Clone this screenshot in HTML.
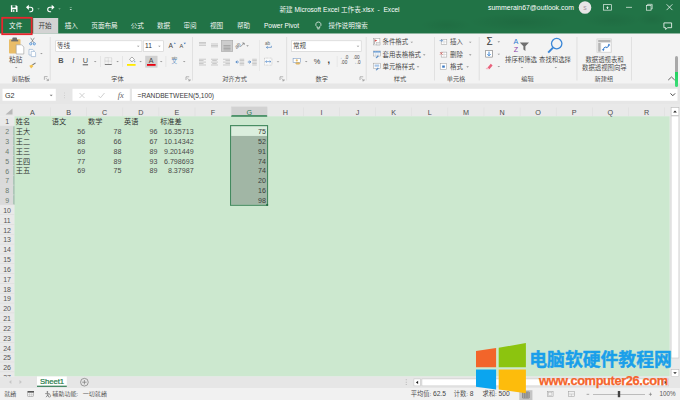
<!DOCTYPE html>
<html lang="zh-CN"><head><meta charset="utf-8"><title>Excel</title>
<style>
html,body{margin:0;padding:0;background:#f3f3f3;}
body{width:680px;height:400px;overflow:hidden;position:relative;font-family:"Liberation Sans","Noto Sans CJK SC",sans-serif;font-weight:350;}
#app{position:absolute;left:0;top:0;width:680px;height:400px;overflow:hidden;background:#f3f3f3;}
.b{position:absolute;display:block;}
.t{position:absolute;white-space:nowrap;line-height:1;}
.w{color:#fff;}
svg{overflow:visible;}
</style></head><body><div id="app">

<svg class="b" style="left:0px;top:0px" width="680" height="34"><rect x="0.00" y="0.00" width="680.00" height="33.80" fill="#217346"/></svg>
<div class="b" style="left:380px;top:0px;width:300px;height:33.6px;background:radial-gradient(ellipse 52px 9px at 140px 22px,rgba(0,0,0,.07),rgba(0,0,0,0)),radial-gradient(ellipse 30px 8px at 232px 20px,rgba(0,0,0,.06),rgba(0,0,0,0)),radial-gradient(ellipse 16px 7px at 272px 19px,rgba(0,0,0,.06),rgba(0,0,0,0)),radial-gradient(ellipse 26px 7px at 66px 25px,rgba(0,0,0,.05),rgba(0,0,0,0));"></div>
<svg class="b" style="left:10px;top:5px" width="9" height="8"><g transform="translate(0.90,0.30)"><path d="M0 0H5.4L6.6 1.2V6.6H0Z" fill="#fff"/><rect x="1.4" y="0" width="3.2" height="2.3" fill="#217346"/><rect x="1.4" y="3.9" width="3.8" height="2.7" fill="#217346"/><rect x="2.3" y="4.6" width="1.1" height="2" fill="#fff"/></g></svg>
<svg class="b" style="left:26px;top:4px" width="9" height="10"><g transform="translate(0.00,0.10)"><path d="M1 3.2H4.6A2.2 2.2 0 0 1 4.6 7.6H3.4" fill="none" stroke="#fff" stroke-width="1.1"/><path d="M0 3.2L2.8 0.6V5.8Z" fill="#fff"/></g></svg>
<svg class="b" style="left:37px;top:8px" width="4" height="3"><g transform="translate(0.30,0.40)"><path d="M0 0H2.4L1.2 1.2Z" fill="#9cc3ad"/></g></svg>
<svg class="b" style="left:46px;top:4px" width="10" height="10"><g transform="translate(0.50,0.10)"><path d="M7 3.2H3.4A2.2 2.2 0 0 0 3.4 7.6H4.6" fill="none" stroke="#fff" stroke-width="1.1"/><path d="M8 3.2L5.2 0.6V5.8Z" fill="#fff"/></g></svg>
<svg class="b" style="left:58px;top:8px" width="4" height="3"><g transform="translate(0.30,0.40)"><path d="M0 0H2.4L1.2 1.2Z" fill="#9cc3ad"/></g></svg>
<svg class="b" style="left:69px;top:7px" width="3" height="1"><rect x="0.70" y="0.30" width="2.20" height="0.60" fill="#8fbfa3"/></svg>
<svg class="b" style="left:69px;top:8px" width="4" height="4"><g transform="translate(0.65,0.93)"><path d="M0 0H2.3L1.15 1.15Z" fill="#fff"/></g></svg>
<div class="t " style="left:339.5px;top:9.6px;font-size:6.6px;color:#fff;transform:translate(-50%,-50%);">新建 Microsoft Excel 工作表.xlsx&nbsp; -&nbsp; Excel</div>
<div class="t " style="left:574px;top:7.8px;font-size:6.9px;color:#fff;transform:translate(-100%,-50%);">summerain67@outlook.com</div>
<svg class="b" style="left:578px;top:1px" width="15" height="14"><g transform="translate(0.70,0.20)"><circle cx="6.3" cy="6.3" r="6.3" fill="#e7e5e6"/></g></svg>
<div class="t " style="left:585px;top:7.6px;font-size:5px;color:#9a8a92;transform:translate(-50%,-50%);">S</div>
<svg class="b" style="left:603px;top:4px" width="10" height="8"><g transform="translate(0.20,0.30)"><rect x=".35" y=".35" width="7.9" height="5.5" fill="none" stroke="#e6f0ea" stroke-width=".7"/><path d="M2.9 3.5L4.3 2L5.7 3.5Z M3.8 3.3H4.8V4.8H3.8Z" fill="#e6f0ea"/></g></svg>
<svg class="b" style="left:626px;top:6px" width="6" height="2"><rect x="0.00" y="0.90" width="6.00" height="0.70" fill="#e6f0ea"/></svg>
<svg class="b" style="left:646px;top:4px" width="8" height="8"><g transform="translate(0.00,0.00)"><rect x=".35" y="1.5" width="4.7" height="4.7" fill="none" stroke="#e6f0ea" stroke-width=".7"/><path d="M1.6 1.5V.35H6.2V4.9H5.05" fill="none" stroke="#e6f0ea" stroke-width=".7"/></g></svg>
<svg class="b" style="left:666px;top:4px" width="8" height="8"><g transform="translate(0.60,0.30)"><path d="M0 0L5.8 5.8M5.8 0L0 5.8" stroke="#eef5f1" stroke-width=".8"/></g></svg>
<svg class="b" style="left:663px;top:22px" width="10" height="9"><g transform="translate(0.50,0.50)"><path d="M.4 .4H8.1V5.2H4L2.2 7V5.2H.4Z" fill="none" stroke="#fff" stroke-width=".8"/></g></svg>
<svg class="b" style="left:33px;top:18px" width="26" height="16"><rect x="0.20" y="0.00" width="25.00" height="15.60" fill="#d3d3d3"/></svg>
<div class="t " style="left:15.7px;top:25.7px;font-size:6.6px;color:#fff;transform:translate(-50%,-50%);">文件</div>
<div class="t " style="left:45px;top:25.7px;font-size:6.6px;color:#333;transform:translate(-50%,-50%);">开始</div>
<div class="t " style="left:71.3px;top:25.6px;font-size:6.6px;color:#fff;transform:translate(-50%,-50%);">插入</div>
<div class="t " style="left:104.5px;top:25.6px;font-size:6.6px;color:#fff;transform:translate(-50%,-50%);">页面布局</div>
<div class="t " style="left:137.3px;top:25.6px;font-size:6.6px;color:#fff;transform:translate(-50%,-50%);">公式</div>
<div class="t " style="left:163.5px;top:25.6px;font-size:6.6px;color:#fff;transform:translate(-50%,-50%);">数据</div>
<div class="t " style="left:190px;top:25.6px;font-size:6.6px;color:#fff;transform:translate(-50%,-50%);">审阅</div>
<div class="t " style="left:216.5px;top:25.6px;font-size:6.6px;color:#fff;transform:translate(-50%,-50%);">视图</div>
<div class="t " style="left:243.5px;top:25.6px;font-size:6.6px;color:#fff;transform:translate(-50%,-50%);">帮助</div>
<div class="t " style="left:281.5px;top:25.6px;font-size:6.6px;color:#fff;transform:translate(-50%,-50%);">Power Pivot</div>
<svg class="b" style="left:315px;top:21px" width="8" height="10"><g transform="translate(0.40,0.50)"><path d="M3 .5A2.5 2.5 0 0 1 4.3 5.2V6.4H1.7V5.2A2.5 2.5 0 0 1 3 .5Z" fill="none" stroke="#fff" stroke-width=".7"/><path d="M1.9 7.4H4.1" stroke="#fff" stroke-width=".7"/></g></svg>
<div class="t " style="left:328.4px;top:25.6px;font-size:6.6px;color:#fff;transform:translate(0,-50%);">操作说明搜索</div>
<svg class="b" style="left:0px;top:33px" width="680" height="51"><rect x="0.00" y="0.60" width="680.00" height="49.90" fill="#f3f3f3"/></svg>
<svg class="b" style="left:49px;top:37px" width="2" height="44"><rect x="0.80" y="0.00" width="0.70" height="43.50" fill="#d8d8d8"/></svg>
<svg class="b" style="left:192px;top:37px" width="1" height="44"><rect x="0.30" y="0.00" width="0.70" height="43.50" fill="#d8d8d8"/></svg>
<svg class="b" style="left:286px;top:37px" width="2" height="44"><rect x="0.40" y="0.00" width="0.70" height="43.50" fill="#d8d8d8"/></svg>
<svg class="b" style="left:365px;top:37px" width="2" height="44"><rect x="0.80" y="0.00" width="0.70" height="43.50" fill="#d8d8d8"/></svg>
<svg class="b" style="left:434px;top:37px" width="1" height="44"><rect x="0.00" y="0.00" width="0.70" height="43.50" fill="#d8d8d8"/></svg>
<svg class="b" style="left:478px;top:37px" width="2" height="44"><rect x="0.80" y="0.00" width="0.70" height="43.50" fill="#d8d8d8"/></svg>
<svg class="b" style="left:576px;top:37px" width="2" height="44"><rect x="0.60" y="0.00" width="0.70" height="43.50" fill="#d8d8d8"/></svg>
<svg class="b" style="left:631px;top:37px" width="1" height="44"><rect x="0.20" y="0.00" width="0.70" height="43.50" fill="#d8d8d8"/></svg>
<svg class="b" style="left:9px;top:37px" width="16" height="19"><g transform="translate(0.00,0.60)"><rect x="0" y="1.6" width="11.5" height="14.4" rx=".8" fill="#e9bd68"/><rect x="3.4" y="0" width="4.6" height="3.2" rx=".8" fill="#6d6d6d"/><rect x="2.2" y="2.2" width="7" height="1.6" fill="#6d6d6d"/><path d="M7.2 7.2H12.6L14.8 9.4V16.4H7.2Z" fill="#fff" stroke="#9a9a9a" stroke-width=".6"/></g></svg>
<div class="t" style="left:15.7px;top:59.6px;font-size:6.6px;color:#3c3c3c;transform:translate(-50%,-50%);">粘贴</div>
<svg class="b" style="left:14px;top:66px" width="5" height="4"><g transform="translate(0.90,0.95)"><path d="M0 0H2.6L1.3 1.3Z" fill="#969696"/></g></svg>
<svg class="b" style="left:29px;top:37px" width="8" height="10"><g transform="translate(0.30,0.80)"><path d="M1.4 0L4.6 5M5 0L1.8 5" stroke="#777" stroke-width=".7"/><circle cx="1.4" cy="6" r="1.1" fill="none" stroke="#2b7bd0" stroke-width=".7"/><circle cx="5" cy="6" r="1.1" fill="none" stroke="#2b7bd0" stroke-width=".7"/></g></svg>
<svg class="b" style="left:28px;top:49px" width="9" height="9"><g transform="translate(0.60,0.00)"><path d="M.4 .4H4L5.4 1.8V6H.4Z" fill="#fff" stroke="#8aa9cc" stroke-width=".6"/><path d="M2.6 2.4H5.8L7 3.6V7.6H2.6Z" fill="#fff" stroke="#8aa9cc" stroke-width=".6"/></g></svg>
<svg class="b" style="left:40px;top:52px" width="4" height="4"><g transform="translate(0.10,0.95)"><path d="M0 0H2.6L1.3 1.3Z" fill="#969696"/></g></svg>
<svg class="b" style="left:28px;top:62px" width="9" height="8"><g transform="translate(0.90,0.20)"><path d="M3.2 2.2L6.4 .2L6.9 1L3.8 3.2Z" fill="#777"/><path d="M.4 3.6L3.2 2.2L4.4 4L2.2 6.4Z" fill="#f2c14e"/></g></svg>
<div class="t" style="left:21px;top:79.4px;font-size:6.2px;color:#3c3c3c;transform:translate(-50%,-50%);">剪贴板</div>
<svg class="b" style="left:44px;top:76px" width="6" height="6"><g transform="translate(0.40,0.60)"><path d="M0 0H3.2M0 0V3.2" stroke="#888" stroke-width=".6" fill="none"/><path d="M1.6 1.6L4 4M4 4V2.2M4 4H2.2" stroke="#888" stroke-width=".6" fill="none"/></g></svg>
<svg class="b" style="left:55px;top:40px" width="88" height="12"><rect x="0.70" y="0.80" width="86.20" height="10.50" fill="#fff" stroke="#cfcfcf" stroke-width="0.6"/></svg>
<div class="t" style="left:57px;top:46.3px;font-size:6.6px;color:#333;transform:translate(0,-50%);">等线</div>
<svg class="b" style="left:136px;top:45px" width="5" height="3"><g transform="translate(0.90,0.65)"><path d="M0 0H2.6L1.3 1.3Z" fill="#969696"/></g></svg>
<svg class="b" style="left:143px;top:40px" width="21" height="12"><rect x="0.50" y="0.80" width="19.80" height="10.50" fill="#fff" stroke="#cfcfcf" stroke-width="0.6"/></svg>
<div class="t" style="left:145px;top:46.3px;font-size:6.6px;color:#333;transform:translate(0,-50%);">11</div>
<svg class="b" style="left:158px;top:45px" width="4" height="3"><g transform="translate(0.10,0.65)"><path d="M0 0H2.6L1.3 1.3Z" fill="#969696"/></g></svg>
<div class="t" style="left:170.8px;top:46.2px;font-size:6.6px;color:#444;transform:translate(-50%,-50%);">A</div>
<svg class="b" style="left:173px;top:42px" width="4" height="3"><g transform="translate(0.60,0.40)"><path d="M0 1.4L1.2 0L2.4 1.4Z" fill="#3d7ac2"/></g></svg>
<div class="t" style="left:181.4px;top:46.8px;font-size:5.6px;color:#444;transform:translate(-50%,-50%);">A</div>
<svg class="b" style="left:183px;top:42px" width="4" height="4"><g transform="translate(0.60,0.80)"><path d="M0 0L1.2 1.4L2.4 0Z" fill="#3d7ac2"/></g></svg>
<div class="t" style="left:61px;top:61.2px;font-size:7.4px;color:#555;transform:translate(-50%,-50%);font-weight:bold">B</div>
<div class="t" style="left:73.4px;top:61.2px;font-size:7.6px;color:#555;transform:translate(-50%,-50%);font-weight:400"><i>I</i></div>
<div class="t" style="left:85.4px;top:61.2px;font-size:7.4px;color:#555;transform:translate(-50%,-50%);text-decoration:underline;font-weight:400">U</div>
<svg class="b" style="left:93px;top:60px" width="5" height="4"><g transform="translate(0.90,0.95)"><path d="M0 0H2.6L1.3 1.3Z" fill="#969696"/></g></svg>
<svg class="b" style="left:100px;top:56px" width="1" height="11"><rect x="0.00" y="0.00" width="0.60" height="11.00" fill="#dcdcdc"/></svg>
<svg class="b" style="left:104px;top:57px" width="9" height="9"><g transform="translate(0.60,0.40)"><path d="M.3 .3H7.1V7.1H.3ZM3.7 .3V7.1M.3 3.7H7.1" fill="none" stroke="#b5b5b5" stroke-width=".5" stroke-dasharray=".7 .5"/><path d="M.3 7.1H7.1" stroke="#555" stroke-width=".7"/></g></svg>
<svg class="b" style="left:116px;top:60px" width="4" height="4"><g transform="translate(0.30,0.95)"><path d="M0 0H2.6L1.3 1.3Z" fill="#969696"/></g></svg>
<svg class="b" style="left:122px;top:56px" width="1" height="11"><rect x="0.00" y="0.00" width="0.60" height="11.00" fill="#dcdcdc"/></svg>
<svg class="b" style="left:127px;top:56px" width="10" height="9"><g transform="translate(0.40,0.40)"><path d="M2.2 2.8L4.6 .6L7 3L4.4 5.6Z" fill="#fff" stroke="#777" stroke-width=".6"/><path d="M7.4 3.8Q8.6 5.6 7.4 6.2Q6.4 5.6 7.4 3.8Z" fill="#4a86c8"/></g></svg>
<svg class="b" style="left:127px;top:64px" width="9" height="2"><rect x="0.00" y="0.00" width="8.60" height="1.80" fill="#ffe900"/></svg>
<svg class="b" style="left:139px;top:60px" width="4" height="4"><g transform="translate(0.30,0.95)"><path d="M0 0H2.6L1.3 1.3Z" fill="#969696"/></g></svg>
<svg class="b" style="left:145px;top:55px" width="13" height="13"><rect x="0.20" y="0.80" width="12.30" height="11.80" fill="#d0d0d0"/></svg>
<div class="t" style="left:151.2px;top:60.2px;font-size:7px;color:#444;transform:translate(-50%,-50%);">A</div>
<svg class="b" style="left:147px;top:64px" width="9" height="2"><rect x="0.00" y="0.00" width="8.60" height="1.80" fill="#e8000f"/></svg>
<svg class="b" style="left:159px;top:60px" width="5" height="4"><g transform="translate(0.90,0.95)"><path d="M0 0H2.6L1.3 1.3Z" fill="#969696"/></g></svg>
<svg class="b" style="left:165px;top:56px" width="2" height="11"><rect x="0.60" y="0.00" width="0.60" height="11.00" fill="#dcdcdc"/></svg>
<div class="t" style="left:174.4px;top:62.4px;font-size:5.6px;color:#4a7fb8;transform:translate(-50%,-50%);">文</div>
<div class="t" style="left:174.4px;top:58.4px;font-size:3px;color:#666;transform:translate(-50%,-50%);">wén</div>
<svg class="b" style="left:182px;top:60px" width="5" height="4"><g transform="translate(0.90,0.95)"><path d="M0 0H2.6L1.3 1.3Z" fill="#969696"/></g></svg>
<div class="t" style="left:117.5px;top:79.4px;font-size:6.2px;color:#3c3c3c;transform:translate(-50%,-50%);">字体</div>
<svg class="b" style="left:186px;top:76px" width="6" height="7"><g transform="translate(0.00,0.80)"><path d="M0 0H3.2M0 0V3.2" stroke="#888" stroke-width=".6" fill="none"/><path d="M1.6 1.6L4 4M4 4V2.2M4 4H2.2" stroke="#888" stroke-width=".6" fill="none"/></g></svg>
<svg class="b" style="left:199px;top:42px" width="8" height="6"><g transform="translate(0.00,0.00)"><rect x="0.00" y="0.00" width="7.00" height=".75" fill="#bcbcbc"/><rect x="0.00" y="1.45" width="7.00" height=".75" fill="#bcbcbc"/><rect x="0.00" y="2.90" width="7.00" height=".75" fill="#bcbcbc"/></g></svg>
<svg class="b" style="left:211px;top:43px" width="8" height="6"><g transform="translate(0.00,0.60)"><rect x="0.00" y="0.00" width="7.00" height=".75" fill="#bcbcbc"/><rect x="0.00" y="1.45" width="7.00" height=".75" fill="#bcbcbc"/><rect x="0.00" y="2.90" width="7.00" height=".75" fill="#bcbcbc"/></g></svg>
<svg class="b" style="left:221px;top:40px" width="12" height="12"><rect x="0.30" y="0.30" width="11.40" height="11.20" fill="#cdcdcd" stroke="#a6a6a6" stroke-width="0.6"/></svg>
<svg class="b" style="left:223px;top:45px" width="9" height="7"><g transform="translate(0.50,0.20)"><rect x="0.00" y="0.00" width="7.00" height=".75" fill="#9c9c9c"/><rect x="0.00" y="1.45" width="7.00" height=".75" fill="#9c9c9c"/><rect x="0.00" y="2.90" width="7.00" height=".75" fill="#9c9c9c"/><rect x="0.00" y="4.35" width="7.00" height=".75" fill="#9c9c9c"/></g></svg>
<div class="t" style="left:238.4px;top:45.8px;font-size:5.4px;color:#666;transform:translate(-50%,-50%);transform:translate(-50%,-50%) rotate(-40deg)"><i>ab</i></div>
<svg class="b" style="left:240px;top:43px" width="6" height="5"><g transform="translate(0.20,0.00)"><path d="M0 4L4 0M4 0H2M4 0V2" stroke="#666" stroke-width=".6" fill="none"/></g></svg>
<svg class="b" style="left:246px;top:45px" width="4" height="3"><g transform="translate(0.20,0.35)"><path d="M0 0H2.6L1.3 1.3Z" fill="#969696"/></g></svg>
<svg class="b" style="left:259px;top:40px" width="1" height="31"><rect x="0.00" y="0.00" width="0.60" height="31.00" fill="#e2e2e2"/></svg>
<div class="t" style="left:267.6px;top:44.2px;font-size:4.6px;color:#666;transform:translate(-50%,-50%);">ab</div>
<svg class="b" style="left:265px;top:45px" width="8" height="5"><g transform="translate(0.40,0.80)"><path d="M6 0V1.6H1M1 1.6L2.4 .4M1 1.6L2.4 2.8" stroke="#3d7ac2" stroke-width=".6" fill="none"/></g></svg>
<svg class="b" style="left:199px;top:58px" width="8" height="10"><g transform="translate(0.00,0.80)"><rect x="0.00" y="0.00" width="7.00" height=".75" fill="#bcbcbc"/><rect x="0.00" y="1.45" width="4.55" height=".75" fill="#bcbcbc"/><rect x="0.00" y="2.90" width="7.00" height=".75" fill="#bcbcbc"/><rect x="0.00" y="4.35" width="4.55" height=".75" fill="#bcbcbc"/><rect x="0.00" y="5.80" width="7.00" height=".75" fill="#bcbcbc"/></g></svg>
<svg class="b" style="left:211px;top:58px" width="8" height="10"><g transform="translate(0.00,0.80)"><rect x="0.00" y="0.00" width="7.00" height=".75" fill="#bcbcbc"/><rect x="1.23" y="1.45" width="4.55" height=".75" fill="#bcbcbc"/><rect x="0.00" y="2.90" width="7.00" height=".75" fill="#bcbcbc"/><rect x="1.23" y="4.35" width="4.55" height=".75" fill="#bcbcbc"/><rect x="0.00" y="5.80" width="7.00" height=".75" fill="#bcbcbc"/></g></svg>
<svg class="b" style="left:223px;top:58px" width="8" height="10"><g transform="translate(0.00,0.80)"><rect x="0.00" y="0.00" width="7.00" height=".75" fill="#bcbcbc"/><rect x="2.45" y="1.45" width="4.55" height=".75" fill="#bcbcbc"/><rect x="0.00" y="2.90" width="7.00" height=".75" fill="#bcbcbc"/><rect x="2.45" y="4.35" width="4.55" height=".75" fill="#bcbcbc"/><rect x="0.00" y="5.80" width="7.00" height=".75" fill="#bcbcbc"/></g></svg>
<svg class="b" style="left:239px;top:58px" width="7" height="10"><g transform="translate(0.60,0.80)"><rect x="0.00" y="0.00" width="4.60" height=".75" fill="#bcbcbc"/><rect x="0.00" y="1.45" width="4.60" height=".75" fill="#bcbcbc"/><rect x="0.00" y="2.90" width="4.60" height=".75" fill="#bcbcbc"/><rect x="0.00" y="4.35" width="4.60" height=".75" fill="#bcbcbc"/><rect x="0.00" y="5.80" width="4.60" height=".75" fill="#bcbcbc"/></g></svg>
<svg class="b" style="left:235px;top:60px" width="5" height="5"><g transform="translate(0.40,0.40)"><path d="M3.4 1.6H.6M.4 1.6L1.8 .2M.4 1.6L1.8 3" stroke="#3d7ac2" stroke-width=".8" fill="none"/></g></svg>
<svg class="b" style="left:252px;top:58px" width="6" height="10"><g transform="translate(0.20,0.80)"><rect x="0.00" y="0.00" width="4.60" height=".75" fill="#bcbcbc"/><rect x="0.00" y="1.45" width="4.60" height=".75" fill="#bcbcbc"/><rect x="0.00" y="2.90" width="4.60" height=".75" fill="#bcbcbc"/><rect x="0.00" y="4.35" width="4.60" height=".75" fill="#bcbcbc"/><rect x="0.00" y="5.80" width="4.60" height=".75" fill="#bcbcbc"/></g></svg>
<svg class="b" style="left:247px;top:60px" width="6" height="5"><g transform="translate(0.80,0.40)"><path d="M0 1.6H2.8M3 1.6L1.6 .2M3 1.6L1.6 3" stroke="#3d7ac2" stroke-width=".8" fill="none"/></g></svg>
<svg class="b" style="left:264px;top:57px" width="10" height="10"><g transform="translate(0.20,0.80)"><rect x=".3" y=".3" width="7.4" height="7" fill="#fafafa" stroke="#a8a8a8" stroke-width=".5" stroke-dasharray=".8 .6"/><path d="M1.4 3.8H6.6M1.4 3.8L2.6 2.7M1.4 3.8L2.6 4.9M6.6 3.8L5.4 2.7M6.6 3.8L5.4 4.9" stroke="#3d7ac2" stroke-width=".6" fill="none"/></g></svg>
<svg class="b" style="left:276px;top:61px" width="5" height="3"><g transform="translate(0.70,0.15)"><path d="M0 0H2.6L1.3 1.3Z" fill="#969696"/></g></svg>
<div class="t" style="left:234.5px;top:79.4px;font-size:6.2px;color:#3c3c3c;transform:translate(-50%,-50%);">对齐方式</div>
<svg class="b" style="left:280px;top:76px" width="6" height="7"><g transform="translate(0.00,0.80)"><path d="M0 0H3.2M0 0V3.2" stroke="#888" stroke-width=".6" fill="none"/><path d="M1.6 1.6L4 4M4 4V2.2M4 4H2.2" stroke="#888" stroke-width=".6" fill="none"/></g></svg>
<svg class="b" style="left:291px;top:40px" width="71" height="12"><rect x="0.30" y="0.80" width="69.90" height="10.50" fill="#fff" stroke="#cfcfcf" stroke-width="0.6"/></svg>
<div class="t" style="left:293px;top:46.3px;font-size:6.6px;color:#333;transform:translate(0,-50%);">常规</div>
<svg class="b" style="left:356px;top:45px" width="5" height="3"><g transform="translate(0.70,0.65)"><path d="M0 0H2.6L1.3 1.3Z" fill="#969696"/></g></svg>
<svg class="b" style="left:292px;top:58px" width="10" height="8"><g transform="translate(0.80,0.00)"><rect x=".3" y=".3" width="7.4" height="4.2" fill="#fff" stroke="#7d9cc4" stroke-width=".6"/><circle cx="4" cy="2.4" r="1.1" fill="#e9bd68"/><ellipse cx="5" cy="5.4" rx="2.2" ry=".9" fill="#e9bd68" stroke="#b88d3a" stroke-width=".3"/></g></svg>
<svg class="b" style="left:304px;top:60px" width="5" height="4"><g transform="translate(0.90,0.95)"><path d="M0 0H2.6L1.3 1.3Z" fill="#969696"/></g></svg>
<div class="t" style="left:317px;top:61.6px;font-size:7.4px;color:#444;transform:translate(-50%,-50%);">%</div>
<div class="t" style="left:328.8px;top:59.6px;font-size:9px;color:#333;transform:translate(-50%,-50%);font-weight:bold">,</div>
<svg class="b" style="left:336px;top:56px" width="2" height="11"><rect x="0.80" y="0.00" width="0.60" height="11.00" fill="#dedede"/></svg>
<div class="t" style="left:344px;top:61.4px;font-size:4.6px;color:#444;transform:translate(-50%,-50%);line-height:1;text-align:center"><span style='color:#3d7ac2'>←</span>.0<br>.00</div>
<div class="t" style="left:356.4px;top:61.4px;font-size:4.6px;color:#444;transform:translate(-50%,-50%);line-height:1;text-align:center">.00<br><span style='color:#3d7ac2'>→</span>.0</div>
<div class="t" style="left:321.7px;top:79.4px;font-size:6.2px;color:#3c3c3c;transform:translate(-50%,-50%);">数字</div>
<svg class="b" style="left:360px;top:76px" width="6" height="7"><g transform="translate(0.00,0.80)"><path d="M0 0H3.2M0 0V3.2" stroke="#888" stroke-width=".6" fill="none"/><path d="M1.6 1.6L4 4M4 4V2.2M4 4H2.2" stroke="#888" stroke-width=".6" fill="none"/></g></svg>
<svg class="b" style="left:373px;top:38px" width="9" height="9"><g transform="translate(0.00,0.00)"><rect x=".3" y=".3" width="6.6" height="6.6" fill="#fff" stroke="#9a9a9a" stroke-width=".5"/><path d="M1.6 1.2V6" stroke="#666" stroke-width=".5"/><path d="M1.8 1.4L4.4 2.6L1.8 3.8Z" fill="#d9534f"/><rect x="3.4" y="4.2" width="3.6" height="2.8" fill="#e8e8e8" stroke="#999" stroke-width=".3"/></g></svg>
<div class="t" style="left:382.6px;top:42px;font-size:6.4px;color:#3c3c3c;transform:translate(0,-50%);">条件格式</div>
<svg class="b" style="left:410px;top:41px" width="5" height="4"><g transform="translate(0.50,0.75)"><path d="M0 0H2.6L1.3 1.3Z" fill="#969696"/></g></svg>
<svg class="b" style="left:373px;top:50px" width="9" height="10"><g transform="translate(0.00,0.70)"><rect x=".3" y=".3" width="7.2" height="5" fill="#fff" stroke="#9a9a9a" stroke-width=".5"/><rect x=".3" y=".3" width="7.2" height="1.6" fill="#6fa0d6"/><path d="M.3 3.4H7.5M2.7 .3V5.3M5.1 .3V5.3" stroke="#b5c7dc" stroke-width=".4"/><path d="M2.6 7.2L4.8 4.6L5.8 5.6L3.6 7.6Z" fill="#5b8fc9"/></g></svg>
<div class="t" style="left:382.6px;top:54.6px;font-size:6.4px;color:#3c3c3c;transform:translate(0,-50%);">套用表格格式</div>
<svg class="b" style="left:422px;top:54px" width="5" height="3"><g transform="translate(0.90,0.35)"><path d="M0 0H2.6L1.3 1.3Z" fill="#969696"/></g></svg>
<svg class="b" style="left:373px;top:62px" width="9" height="10"><g transform="translate(0.00,0.90)"><rect x=".3" y=".3" width="7.2" height="5" fill="#fff" stroke="#9a9a9a" stroke-width=".5"/><rect x="1.6" y="1.6" width="4.6" height="2.2" fill="#a9c6e8"/><path d="M2.6 7.2L4.8 4.6L5.8 5.6L3.6 7.6Z" fill="#5b8fc9"/></g></svg>
<div class="t" style="left:382.6px;top:66.6px;font-size:6.4px;color:#3c3c3c;transform:translate(0,-50%);">单元格样式</div>
<svg class="b" style="left:416px;top:66px" width="5" height="3"><g transform="translate(0.70,0.35)"><path d="M0 0H2.6L1.3 1.3Z" fill="#969696"/></g></svg>
<div class="t" style="left:400px;top:79.4px;font-size:6.2px;color:#3c3c3c;transform:translate(-50%,-50%);">样式</div>
<svg class="b" style="left:439px;top:38px" width="10" height="8"><g transform="translate(0.60,0.40)"><rect x="1.6" y="1" width="5.6" height="5" fill="#fff" stroke="#9a9a9a" stroke-width=".5"/><path d="M1.6 3.5H7.2M4.4 1V6" stroke="#bbb" stroke-width=".4"/><path d="M0 2.2H2.8M1.8 1L3 2.2L1.8 3.4" stroke="#3d7ac2" stroke-width=".6" fill="none"/></g></svg>
<div class="t" style="left:450px;top:42px;font-size:6.4px;color:#3c3c3c;transform:translate(0,-50%);">插入</div>
<svg class="b" style="left:468px;top:41px" width="5" height="4"><g transform="translate(0.90,0.75)"><path d="M0 0H2.6L1.3 1.3Z" fill="#969696"/></g></svg>
<svg class="b" style="left:439px;top:51px" width="10" height="8"><g transform="translate(0.60,0.10)"><rect x="1.6" y="1" width="5.6" height="5" fill="#fff" stroke="#9a9a9a" stroke-width=".5"/><path d="M1.6 3.5H7.2M4.4 1V6" stroke="#bbb" stroke-width=".4"/><path d="M.4 1L3 3.6M3 1L.4 3.6" stroke="#d9534f" stroke-width=".7" fill="none"/></g></svg>
<div class="t" style="left:450px;top:54.6px;font-size:6.4px;color:#3c3c3c;transform:translate(0,-50%);">删除</div>
<svg class="b" style="left:468px;top:54px" width="5" height="3"><g transform="translate(0.90,0.35)"><path d="M0 0H2.6L1.3 1.3Z" fill="#969696"/></g></svg>
<svg class="b" style="left:439px;top:63px" width="10" height="8"><g transform="translate(0.60,0.10)"><rect x=".6" y=".6" width="6.4" height="5.6" fill="#fff" stroke="#9a9a9a" stroke-width=".5"/><rect x="2.6" y="2.4" width="2.6" height="2.2" fill="#3d7ac2"/></g></svg>
<div class="t" style="left:450px;top:66.6px;font-size:6.4px;color:#3c3c3c;transform:translate(0,-50%);">格式</div>
<svg class="b" style="left:466px;top:66px" width="4" height="3"><g transform="translate(0.30,0.35)"><path d="M0 0H2.6L1.3 1.3Z" fill="#969696"/></g></svg>
<div class="t" style="left:456px;top:79.4px;font-size:6.2px;color:#3c3c3c;transform:translate(-50%,-50%);">单元格</div>
<div class="t" style="left:489.6px;top:41.6px;font-size:10px;color:#3a3a3a;transform:translate(-50%,-50%);">Σ</div>
<svg class="b" style="left:497px;top:41px" width="5" height="3"><g transform="translate(0.50,0.35)"><path d="M0 0H2.6L1.3 1.3Z" fill="#969696"/></g></svg>
<svg class="b" style="left:485px;top:50px" width="9" height="9"><g transform="translate(0.40,0.20)"><rect x=".3" y=".3" width="6.6" height="6.6" fill="#fff" stroke="#777" stroke-width=".6"/><path d="M3.6 1.4V5.4M3.6 5.6L2 4M3.6 5.6L5.2 4" stroke="#2b7bd0" stroke-width=".9" fill="none"/></g></svg>
<svg class="b" style="left:497px;top:53px" width="5" height="4"><g transform="translate(0.50,0.75)"><path d="M0 0H2.6L1.3 1.3Z" fill="#969696"/></g></svg>
<svg class="b" style="left:485px;top:63px" width="9" height="8"><g transform="translate(0.00,0.00)"><path d="M2.6 4.6L5.8 .8L7.6 2.4L4.4 6.2Z" fill="#e8607a"/><path d="M.6 5.2L2.6 4.6L4.4 6.2H1.4Z" fill="#f3b6c2"/></g></svg>
<svg class="b" style="left:497px;top:65px" width="5" height="4"><g transform="translate(0.50,0.95)"><path d="M0 0H2.6L1.3 1.3Z" fill="#969696"/></g></svg>
<div class="t" style="left:515.9px;top:42.3px;font-size:7.2px;color:#2b7bd0;transform:translate(-50%,-50%);">A</div>
<div class="t" style="left:515.9px;top:49.7px;font-size:7.2px;color:#8b3fa8;transform:translate(-50%,-50%);">Z</div>
<svg class="b" style="left:519px;top:42px" width="11" height="10"><g transform="translate(0.80,0.40)"><path d="M0 0H9.2L5.6 3.8V8.6L3.6 7.2V3.8Z" fill="#6f6f6f"/></g></svg>
<div class="t" style="left:537px;top:59.6px;font-size:6.4px;color:#3c3c3c;transform:translate(-100%,-50%);">排序和筛选</div>
<svg class="b" style="left:520px;top:66px" width="5" height="4"><g transform="translate(0.70,0.95)"><path d="M0 0H2.6L1.3 1.3Z" fill="#969696"/></g></svg>
<svg class="b" style="left:547px;top:37px" width="17" height="18"><g transform="translate(0.00,0.60)"><circle cx="9.7" cy="6" r="5.2" fill="none" stroke="#3a86d6" stroke-width="1.3"/><path d="M6 10L1.2 15" stroke="#3a86d6" stroke-width="2"/></g></svg>
<div class="t" style="left:555px;top:59.6px;font-size:6.4px;color:#3c3c3c;transform:translate(-50%,-50%);">查找和选择</div>
<svg class="b" style="left:554px;top:66px" width="5" height="4"><g transform="translate(0.50,0.95)"><path d="M0 0H2.6L1.3 1.3Z" fill="#969696"/></g></svg>
<div class="t" style="left:527.5px;top:79.4px;font-size:6.2px;color:#3c3c3c;transform:translate(-50%,-50%);">编辑</div>
<svg class="b" style="left:596px;top:38px" width="17" height="16"><g transform="translate(0.60,0.60)"><rect x=".3" y=".3" width="14.8" height="13.8" fill="#ececec" stroke="#d0d0d0" stroke-width=".6"/><rect x="1.6" y="1.4" width="12.2" height="2.2" fill="#b4b4b4"/><rect x="1.6" y="4.4" width="2.4" height="8.6" fill="#b4b4b4"/><rect x="4.8" y="4.4" width="9" height="8.6" fill="#fff"/><path d="M6.6 11.4Q6.8 8.4 9.6 8.2M12.4 6Q12.2 9 9.4 9.2" stroke="#3a7fd0" stroke-width="1" fill="none"/><path d="M5.4 10.4L6.6 12.6L8 10.6Z M13.6 7L12.4 4.8L11 6.8Z" fill="#3a7fd0"/></g></svg>
<div class="t" style="left:604.6px;top:59.6px;font-size:6.4px;color:#3c3c3c;transform:translate(-50%,-50%);">数据透视表和</div>
<div class="t" style="left:604.4px;top:67.6px;font-size:6.4px;color:#3c3c3c;transform:translate(-50%,-50%);">数据透视图向导</div>
<div class="t" style="left:603.8px;top:79.4px;font-size:6.2px;color:#3c3c3c;transform:translate(-50%,-50%);">新建组</div>
<svg class="b" style="left:0px;top:83px" width="680" height="21"><rect x="0.00" y="0.50" width="680.00" height="20.50" fill="#e6e6e6"/></svg>
<svg class="b" style="left:2px;top:88px" width="54" height="13"><rect x="0.50" y="0.80" width="53.30" height="12.00" fill="#fff"/></svg>
<div class="t " style="left:5px;top:95.6px;font-size:7.2px;color:#333;transform:translate(0,-50%);">G2</div>
<svg class="b" style="left:49px;top:94px" width="5" height="4"><g transform="translate(0.70,0.65)"><path d="M0 0H3.0L1.5 1.5Z" fill="#777"/></g></svg>
<svg class="b" style="left:64px;top:92px" width="1" height="2"><rect x="0.20" y="0.60" width="0.80" height="0.80" fill="#c2c2c2"/></svg>
<svg class="b" style="left:64px;top:95px" width="1" height="1"><rect x="0.20" y="0.00" width="0.80" height="0.80" fill="#c2c2c2"/></svg>
<svg class="b" style="left:64px;top:97px" width="1" height="2"><rect x="0.20" y="0.40" width="0.80" height="0.80" fill="#c2c2c2"/></svg>
<svg class="b" style="left:72px;top:88px" width="58" height="13"><rect x="0.50" y="0.80" width="57.30" height="12.00" fill="#fff"/></svg>
<svg class="b" style="left:79px;top:93px" width="7" height="6"><g transform="translate(0.50,0.00)"><path d="M0 0L5 5M5 0L0 5" stroke="#c4c4c4" stroke-width=".8"/></g></svg>
<svg class="b" style="left:98px;top:93px" width="8" height="6"><g transform="translate(0.50,0.00)"><path d="M0 2.8L2 4.8L6 0" fill="none" stroke="#c4c4c4" stroke-width=".8"/></g></svg>
<div class="t " style="left:120.7px;top:95px;font-size:8.6px;color:#666;transform:translate(-50%,-50%);font-family:'Liberation Serif',serif;letter-spacing:-.2px"><i>fx</i></div>
<svg class="b" style="left:132px;top:88px" width="546" height="13"><rect x="0.00" y="0.80" width="545.50" height="12.00" fill="#fff"/></svg>
<div class="t " style="left:137.5px;top:95.6px;font-size:6.65px;color:#3a3a3a;transform:translate(0,-50%);">=RANDBETWEEN(5,100)</div>
<svg class="b" style="left:670px;top:93px" width="7" height="4"><g transform="translate(0.50,0.40)"><path d="M0 0L2.3 2.3L4.6 0" fill="none" stroke="#444" stroke-width="1"/></g></svg>
<svg class="b" style="left:0px;top:104px" width="680" height="13"><rect x="0.00" y="0.00" width="680.00" height="12.30" fill="#e9e9e9"/></svg>
<svg class="b" style="left:0px;top:116px" width="15" height="261"><rect x="0.00" y="0.27" width="14.40" height="260.23" fill="#e9e9e9"/></svg>
<svg class="b" style="left:14px;top:116px" width="656" height="261"><rect x="0.40" y="0.27" width="655.40" height="260.23" fill="#cce8cf"/></svg>
<svg class="b" style="left:5px;top:108px" width="9" height="8"><g transform="translate(0.50,0.40)"><path d="M7 0V6.2H0Z" fill="#b8b8b8"/></g></svg>
<div class="t " style="left:32.46px;top:112.6px;font-size:7.2px;color:#4d4d4d;transform:translate(-50%,-50%);">A</div>
<svg class="b" style="left:50px;top:107px" width="1" height="10"><rect x="0.22" y="0.50" width="0.60" height="8.70" fill="#dedede"/></svg>
<div class="t " style="left:68.58px;top:112.6px;font-size:7.2px;color:#4d4d4d;transform:translate(-50%,-50%);">B</div>
<svg class="b" style="left:86px;top:107px" width="1" height="10"><rect x="0.34" y="0.50" width="0.60" height="8.70" fill="#dedede"/></svg>
<div class="t " style="left:104.7px;top:112.6px;font-size:7.2px;color:#4d4d4d;transform:translate(-50%,-50%);">C</div>
<svg class="b" style="left:122px;top:107px" width="2" height="10"><rect x="0.46" y="0.50" width="0.60" height="8.70" fill="#dedede"/></svg>
<div class="t " style="left:140.82px;top:112.6px;font-size:7.2px;color:#4d4d4d;transform:translate(-50%,-50%);">D</div>
<svg class="b" style="left:158px;top:107px" width="2" height="10"><rect x="0.58" y="0.50" width="0.60" height="8.70" fill="#dedede"/></svg>
<div class="t " style="left:176.94px;top:112.6px;font-size:7.2px;color:#4d4d4d;transform:translate(-50%,-50%);">E</div>
<svg class="b" style="left:194px;top:107px" width="2" height="10"><rect x="0.70" y="0.50" width="0.60" height="8.70" fill="#dedede"/></svg>
<div class="t " style="left:213.06px;top:112.6px;font-size:7.2px;color:#4d4d4d;transform:translate(-50%,-50%);">F</div>
<svg class="b" style="left:231px;top:106px" width="37" height="10"><rect x="0.12" y="0.60" width="36.12" height="8.60" fill="#d2d2d2"/></svg>
<svg class="b" style="left:231px;top:115px" width="37" height="2"><rect x="0.12" y="0.10" width="36.12" height="1.70" fill="#3f8a5e"/></svg>
<svg class="b" style="left:230px;top:107px" width="2" height="10"><rect x="0.82" y="0.50" width="0.60" height="8.70" fill="#dedede"/></svg>
<div class="t " style="left:249.17999999999998px;top:112.6px;font-size:7.2px;color:#2e7d52;transform:translate(-50%,-50%);">G</div>
<svg class="b" style="left:266px;top:107px" width="2" height="10"><rect x="0.94" y="0.50" width="0.60" height="8.70" fill="#dedede"/></svg>
<div class="t " style="left:285.29999999999995px;top:112.6px;font-size:7.2px;color:#4d4d4d;transform:translate(-50%,-50%);">H</div>
<svg class="b" style="left:303px;top:107px" width="1" height="10"><rect x="0.06" y="0.50" width="0.60" height="8.70" fill="#dedede"/></svg>
<div class="t " style="left:321.41999999999996px;top:112.6px;font-size:7.2px;color:#4d4d4d;transform:translate(-50%,-50%);">I</div>
<svg class="b" style="left:339px;top:107px" width="1" height="10"><rect x="0.18" y="0.50" width="0.60" height="8.70" fill="#dedede"/></svg>
<div class="t " style="left:357.53999999999996px;top:112.6px;font-size:7.2px;color:#4d4d4d;transform:translate(-50%,-50%);">J</div>
<svg class="b" style="left:375px;top:107px" width="1" height="10"><rect x="0.30" y="0.50" width="0.60" height="8.70" fill="#dedede"/></svg>
<div class="t " style="left:393.65999999999997px;top:112.6px;font-size:7.2px;color:#4d4d4d;transform:translate(-50%,-50%);">K</div>
<svg class="b" style="left:411px;top:107px" width="2" height="10"><rect x="0.42" y="0.50" width="0.60" height="8.70" fill="#dedede"/></svg>
<div class="t " style="left:429.78px;top:112.6px;font-size:7.2px;color:#4d4d4d;transform:translate(-50%,-50%);">L</div>
<svg class="b" style="left:447px;top:107px" width="2" height="10"><rect x="0.54" y="0.50" width="0.60" height="8.70" fill="#dedede"/></svg>
<div class="t " style="left:465.8999999999999px;top:112.6px;font-size:7.2px;color:#4d4d4d;transform:translate(-50%,-50%);">M</div>
<svg class="b" style="left:483px;top:107px" width="2" height="10"><rect x="0.66" y="0.50" width="0.60" height="8.70" fill="#dedede"/></svg>
<div class="t " style="left:502.0199999999999px;top:112.6px;font-size:7.2px;color:#4d4d4d;transform:translate(-50%,-50%);">N</div>
<svg class="b" style="left:519px;top:107px" width="2" height="10"><rect x="0.78" y="0.50" width="0.60" height="8.70" fill="#dedede"/></svg>
<div class="t " style="left:538.1399999999999px;top:112.6px;font-size:7.2px;color:#4d4d4d;transform:translate(-50%,-50%);">O</div>
<svg class="b" style="left:555px;top:107px" width="2" height="10"><rect x="0.90" y="0.50" width="0.60" height="8.70" fill="#dedede"/></svg>
<div class="t " style="left:574.2599999999999px;top:112.6px;font-size:7.2px;color:#4d4d4d;transform:translate(-50%,-50%);">P</div>
<svg class="b" style="left:592px;top:107px" width="1" height="10"><rect x="0.02" y="0.50" width="0.60" height="8.70" fill="#dedede"/></svg>
<div class="t " style="left:610.3799999999999px;top:112.6px;font-size:7.2px;color:#4d4d4d;transform:translate(-50%,-50%);">Q</div>
<svg class="b" style="left:628px;top:107px" width="1" height="10"><rect x="0.14" y="0.50" width="0.60" height="8.70" fill="#dedede"/></svg>
<div class="t " style="left:646.4999999999999px;top:112.6px;font-size:7.2px;color:#4d4d4d;transform:translate(-50%,-50%);">R</div>
<svg class="b" style="left:664px;top:107px" width="1" height="10"><rect x="0.26" y="0.50" width="0.60" height="8.70" fill="#dedede"/></svg>
<svg class="b" style="left:0px;top:126px" width="15" height="79"><rect x="0.00" y="0.10" width="14.40" height="78.64" fill="#dadada"/></svg>
<svg class="b" style="left:13px;top:126px" width="2" height="79"><rect x="0.50" y="0.10" width="0.90" height="78.64" fill="#7fb094"/></svg>
<div class="t " style="left:7.1px;top:121.485px;font-size:7px;color:#555;transform:translate(-50%,-50%);">1</div>
<svg class="b" style="left:0px;top:125px" width="15" height="2"><rect x="0.00" y="0.80" width="14.40" height="0.60" fill="#dcdcdc"/></svg>
<div class="t " style="left:7.1px;top:131.315px;font-size:7px;color:#6b7a70;transform:translate(-50%,-50%);">2</div>
<svg class="b" style="left:0px;top:135px" width="15" height="2"><rect x="0.00" y="0.63" width="14.40" height="0.60" fill="#dcdcdc"/></svg>
<div class="t " style="left:7.1px;top:141.145px;font-size:7px;color:#6b7a70;transform:translate(-50%,-50%);">3</div>
<svg class="b" style="left:0px;top:145px" width="15" height="2"><rect x="0.00" y="0.46" width="14.40" height="0.60" fill="#dcdcdc"/></svg>
<div class="t " style="left:7.1px;top:150.97500000000002px;font-size:7px;color:#6b7a70;transform:translate(-50%,-50%);">4</div>
<svg class="b" style="left:0px;top:155px" width="15" height="1"><rect x="0.00" y="0.29" width="14.40" height="0.60" fill="#dcdcdc"/></svg>
<div class="t " style="left:7.1px;top:160.805px;font-size:7px;color:#6b7a70;transform:translate(-50%,-50%);">5</div>
<svg class="b" style="left:0px;top:165px" width="15" height="1"><rect x="0.00" y="0.12" width="14.40" height="0.60" fill="#dcdcdc"/></svg>
<div class="t " style="left:7.1px;top:170.635px;font-size:7px;color:#6b7a70;transform:translate(-50%,-50%);">6</div>
<svg class="b" style="left:0px;top:174px" width="15" height="2"><rect x="0.00" y="0.95" width="14.40" height="0.60" fill="#dcdcdc"/></svg>
<div class="t " style="left:7.1px;top:180.465px;font-size:7px;color:#6b7a70;transform:translate(-50%,-50%);">7</div>
<svg class="b" style="left:0px;top:184px" width="15" height="2"><rect x="0.00" y="0.78" width="14.40" height="0.60" fill="#dcdcdc"/></svg>
<div class="t " style="left:7.1px;top:190.29500000000002px;font-size:7px;color:#6b7a70;transform:translate(-50%,-50%);">8</div>
<svg class="b" style="left:0px;top:194px" width="15" height="2"><rect x="0.00" y="0.61" width="14.40" height="0.60" fill="#dcdcdc"/></svg>
<div class="t " style="left:7.1px;top:200.125px;font-size:7px;color:#6b7a70;transform:translate(-50%,-50%);">9</div>
<svg class="b" style="left:0px;top:204px" width="15" height="2"><rect x="0.00" y="0.44" width="14.40" height="0.60" fill="#dcdcdc"/></svg>
<div class="t " style="left:7.1px;top:209.955px;font-size:7px;color:#555;transform:translate(-50%,-50%);">10</div>
<svg class="b" style="left:0px;top:214px" width="15" height="1"><rect x="0.00" y="0.27" width="14.40" height="0.60" fill="#dcdcdc"/></svg>
<div class="t " style="left:7.1px;top:219.78500000000003px;font-size:7px;color:#555;transform:translate(-50%,-50%);">11</div>
<svg class="b" style="left:0px;top:224px" width="15" height="1"><rect x="0.00" y="0.10" width="14.40" height="0.60" fill="#dcdcdc"/></svg>
<div class="t " style="left:7.1px;top:229.615px;font-size:7px;color:#555;transform:translate(-50%,-50%);">12</div>
<svg class="b" style="left:0px;top:233px" width="15" height="2"><rect x="0.00" y="0.93" width="14.40" height="0.60" fill="#dcdcdc"/></svg>
<div class="t " style="left:7.1px;top:239.445px;font-size:7px;color:#555;transform:translate(-50%,-50%);">13</div>
<svg class="b" style="left:0px;top:243px" width="15" height="2"><rect x="0.00" y="0.76" width="14.40" height="0.60" fill="#dcdcdc"/></svg>
<div class="t " style="left:7.1px;top:249.27500000000003px;font-size:7px;color:#555;transform:translate(-50%,-50%);">14</div>
<svg class="b" style="left:0px;top:253px" width="15" height="2"><rect x="0.00" y="0.59" width="14.40" height="0.60" fill="#dcdcdc"/></svg>
<div class="t " style="left:7.1px;top:259.105px;font-size:7px;color:#555;transform:translate(-50%,-50%);">15</div>
<svg class="b" style="left:0px;top:263px" width="15" height="2"><rect x="0.00" y="0.42" width="14.40" height="0.60" fill="#dcdcdc"/></svg>
<div class="t " style="left:7.1px;top:268.935px;font-size:7px;color:#555;transform:translate(-50%,-50%);">16</div>
<svg class="b" style="left:0px;top:273px" width="15" height="1"><rect x="0.00" y="0.25" width="14.40" height="0.60" fill="#dcdcdc"/></svg>
<div class="t " style="left:7.1px;top:278.765px;font-size:7px;color:#555;transform:translate(-50%,-50%);">17</div>
<svg class="b" style="left:0px;top:283px" width="15" height="1"><rect x="0.00" y="0.08" width="14.40" height="0.60" fill="#dcdcdc"/></svg>
<div class="t " style="left:7.1px;top:288.595px;font-size:7px;color:#555;transform:translate(-50%,-50%);">18</div>
<svg class="b" style="left:0px;top:292px" width="15" height="2"><rect x="0.00" y="0.91" width="14.40" height="0.60" fill="#dcdcdc"/></svg>
<div class="t " style="left:7.1px;top:298.425px;font-size:7px;color:#555;transform:translate(-50%,-50%);">19</div>
<svg class="b" style="left:0px;top:302px" width="15" height="2"><rect x="0.00" y="0.74" width="14.40" height="0.60" fill="#dcdcdc"/></svg>
<div class="t " style="left:7.1px;top:308.255px;font-size:7px;color:#555;transform:translate(-50%,-50%);">20</div>
<svg class="b" style="left:0px;top:312px" width="15" height="2"><rect x="0.00" y="0.57" width="14.40" height="0.60" fill="#dcdcdc"/></svg>
<div class="t " style="left:7.1px;top:318.08500000000004px;font-size:7px;color:#555;transform:translate(-50%,-50%);">21</div>
<svg class="b" style="left:0px;top:322px" width="15" height="1"><rect x="0.00" y="0.40" width="14.40" height="0.60" fill="#dcdcdc"/></svg>
<div class="t " style="left:7.1px;top:327.915px;font-size:7px;color:#555;transform:translate(-50%,-50%);">22</div>
<svg class="b" style="left:0px;top:332px" width="15" height="1"><rect x="0.00" y="0.23" width="14.40" height="0.60" fill="#dcdcdc"/></svg>
<div class="t " style="left:7.1px;top:337.745px;font-size:7px;color:#555;transform:translate(-50%,-50%);">23</div>
<svg class="b" style="left:0px;top:342px" width="15" height="1"><rect x="0.00" y="0.06" width="14.40" height="0.60" fill="#dcdcdc"/></svg>
<div class="t " style="left:7.1px;top:347.575px;font-size:7px;color:#555;transform:translate(-50%,-50%);">24</div>
<svg class="b" style="left:0px;top:351px" width="15" height="2"><rect x="0.00" y="0.89" width="14.40" height="0.60" fill="#dcdcdc"/></svg>
<div class="t " style="left:7.1px;top:357.40500000000003px;font-size:7px;color:#555;transform:translate(-50%,-50%);">25</div>
<svg class="b" style="left:0px;top:361px" width="15" height="2"><rect x="0.00" y="0.72" width="14.40" height="0.60" fill="#dcdcdc"/></svg>
<div class="t " style="left:7.1px;top:367.235px;font-size:7px;color:#555;transform:translate(-50%,-50%);">26</div>
<svg class="b" style="left:0px;top:371px" width="15" height="2"><rect x="0.00" y="0.55" width="14.40" height="0.60" fill="#dcdcdc"/></svg>
<div class="t " style="left:7.1px;top:377.065px;font-size:7px;color:#555;transform:translate(-50%,-50%);">27</div>
<svg class="b" style="left:0px;top:381px" width="15" height="1"><rect x="0.00" y="0.38" width="14.40" height="0.60" fill="#dcdcdc"/></svg>
<div class="t " style="left:15.700000000000001px;top:122.185px;font-size:7.2px;color:#2a2a2a;transform:translate(0,-50%);">姓名</div>
<div class="t " style="left:51.81999999999999px;top:122.185px;font-size:7.2px;color:#2a2a2a;transform:translate(0,-50%);">语文</div>
<div class="t " style="left:87.94px;top:122.185px;font-size:7.2px;color:#2a2a2a;transform:translate(0,-50%);">数学</div>
<div class="t " style="left:124.05999999999999px;top:122.185px;font-size:7.2px;color:#2a2a2a;transform:translate(0,-50%);">英语</div>
<div class="t " style="left:160.18px;top:122.185px;font-size:7.2px;color:#2a2a2a;transform:translate(0,-50%);">标准差</div>
<div class="t " style="left:15.700000000000001px;top:132.015px;font-size:7.2px;color:#2a2a2a;transform:translate(0,-50%);">王大</div>
<div class="t " style="left:85.24px;top:133.11499999999998px;font-size:7.1px;color:#4a4a4a;transform:translate(-100%,-50%);">56</div>
<div class="t " style="left:121.35999999999999px;top:133.11499999999998px;font-size:7.1px;color:#4a4a4a;transform:translate(-100%,-50%);">78</div>
<div class="t " style="left:157.48px;top:133.11499999999998px;font-size:7.1px;color:#4a4a4a;transform:translate(-100%,-50%);">96</div>
<div class="t " style="left:193.6px;top:133.11499999999998px;font-size:7.1px;color:#4a4a4a;transform:translate(-100%,-50%);">16.35713</div>
<div class="t " style="left:15.700000000000001px;top:141.845px;font-size:7.2px;color:#2a2a2a;transform:translate(0,-50%);">王二</div>
<div class="t " style="left:85.24px;top:142.945px;font-size:7.1px;color:#4a4a4a;transform:translate(-100%,-50%);">88</div>
<div class="t " style="left:121.35999999999999px;top:142.945px;font-size:7.1px;color:#4a4a4a;transform:translate(-100%,-50%);">66</div>
<div class="t " style="left:157.48px;top:142.945px;font-size:7.1px;color:#4a4a4a;transform:translate(-100%,-50%);">67</div>
<div class="t " style="left:193.6px;top:142.945px;font-size:7.1px;color:#4a4a4a;transform:translate(-100%,-50%);">10.14342</div>
<div class="t " style="left:15.700000000000001px;top:151.675px;font-size:7.2px;color:#2a2a2a;transform:translate(0,-50%);">王三</div>
<div class="t " style="left:85.24px;top:152.775px;font-size:7.1px;color:#4a4a4a;transform:translate(-100%,-50%);">69</div>
<div class="t " style="left:121.35999999999999px;top:152.775px;font-size:7.1px;color:#4a4a4a;transform:translate(-100%,-50%);">88</div>
<div class="t " style="left:157.48px;top:152.775px;font-size:7.1px;color:#4a4a4a;transform:translate(-100%,-50%);">89</div>
<div class="t " style="left:193.6px;top:152.775px;font-size:7.1px;color:#4a4a4a;transform:translate(-100%,-50%);">9.201449</div>
<div class="t " style="left:15.700000000000001px;top:161.505px;font-size:7.2px;color:#2a2a2a;transform:translate(0,-50%);">王四</div>
<div class="t " style="left:85.24px;top:162.605px;font-size:7.1px;color:#4a4a4a;transform:translate(-100%,-50%);">77</div>
<div class="t " style="left:121.35999999999999px;top:162.605px;font-size:7.1px;color:#4a4a4a;transform:translate(-100%,-50%);">89</div>
<div class="t " style="left:157.48px;top:162.605px;font-size:7.1px;color:#4a4a4a;transform:translate(-100%,-50%);">93</div>
<div class="t " style="left:193.6px;top:162.605px;font-size:7.1px;color:#4a4a4a;transform:translate(-100%,-50%);">6.798693</div>
<div class="t " style="left:15.700000000000001px;top:171.33499999999998px;font-size:7.2px;color:#2a2a2a;transform:translate(0,-50%);">王五</div>
<div class="t " style="left:85.24px;top:172.43499999999997px;font-size:7.1px;color:#4a4a4a;transform:translate(-100%,-50%);">69</div>
<div class="t " style="left:121.35999999999999px;top:172.43499999999997px;font-size:7.1px;color:#4a4a4a;transform:translate(-100%,-50%);">75</div>
<div class="t " style="left:157.48px;top:172.43499999999997px;font-size:7.1px;color:#4a4a4a;transform:translate(-100%,-50%);">89</div>
<div class="t " style="left:193.6px;top:172.43499999999997px;font-size:7.1px;color:#4a4a4a;transform:translate(-100%,-50%);">8.37987</div>
<svg class="b" style="left:231px;top:126px" width="37" height="79"><rect x="0.12" y="0.10" width="36.12" height="78.64" fill="#a1b6a5"/></svg>
<svg class="b" style="left:231px;top:126px" width="37" height="10"><rect x="0.12" y="0.10" width="36.12" height="9.83" fill="#dbeedd"/></svg>
<svg class="b" style="left:230px;top:125px" width="39" height="81"><rect x="0.55" y="0.60" width="37.00" height="79.70" fill="none" stroke="#43895f" stroke-width="1.1"/></svg>
<svg class="b" style="left:266px;top:203px" width="3" height="3"><rect x="0.25" y="0.95" width="1.85" height="1.85" fill="#1f6b41"/></svg>
<div class="t " style="left:265.84px;top:133.11499999999998px;font-size:7.1px;color:#3a3f3b;transform:translate(-100%,-50%);">75</div>
<div class="t " style="left:265.84px;top:142.945px;font-size:7.1px;color:#3a3f3b;transform:translate(-100%,-50%);">52</div>
<div class="t " style="left:265.84px;top:152.775px;font-size:7.1px;color:#3a3f3b;transform:translate(-100%,-50%);">91</div>
<div class="t " style="left:265.84px;top:162.605px;font-size:7.1px;color:#3a3f3b;transform:translate(-100%,-50%);">74</div>
<div class="t " style="left:265.84px;top:172.43499999999997px;font-size:7.1px;color:#3a3f3b;transform:translate(-100%,-50%);">74</div>
<div class="t " style="left:265.84px;top:182.265px;font-size:7.1px;color:#3a3f3b;transform:translate(-100%,-50%);">20</div>
<div class="t " style="left:265.84px;top:192.095px;font-size:7.1px;color:#3a3f3b;transform:translate(-100%,-50%);">16</div>
<div class="t " style="left:265.84px;top:201.92499999999998px;font-size:7.1px;color:#3a3f3b;transform:translate(-100%,-50%);">98</div>
<svg class="b" style="left:669px;top:104px" width="11" height="273"><rect x="0.80" y="0.00" width="10.20" height="272.50" fill="#e9e9e9"/></svg>
<svg class="b" style="left:670px;top:107px" width="10" height="9"><rect x="1.10" y="0.60" width="7.80" height="7.80" fill="#fff" stroke="#b8b8b8" stroke-width="0.6"/></svg>
<svg class="b" style="left:673px;top:110px" width="5" height="4"><g transform="translate(0.20,0.40)"><path d="M0 2H3.6L1.8 0Z" fill="#222"/></g></svg>
<svg class="b" style="left:670px;top:115px" width="10" height="244"><rect x="1.10" y="1.00" width="7.80" height="242.00" fill="#fff" stroke="#c6c6c6" stroke-width="0.6"/></svg>
<svg class="b" style="left:670px;top:369px" width="10" height="8"><rect x="1.10" y="0.50" width="7.80" height="7.00" fill="#fff" stroke="#b8b8b8" stroke-width="0.6"/></svg>
<svg class="b" style="left:673px;top:372px" width="5" height="4"><g transform="translate(0.20,0.30)"><path d="M0 0H3.6L1.8 1.8Z" fill="#222"/></g></svg>
<svg class="b" style="left:0px;top:376px" width="680" height="12"><rect x="0.00" y="0.50" width="680.00" height="11.50" fill="#e6e6e6"/></svg>
<svg class="b" style="left:9px;top:380px" width="4" height="5"><g transform="translate(0.00,0.00)"><path d="M2.4 0L0 2L2.4 4Z" fill="#c6c6c6"/></g></svg>
<svg class="b" style="left:19px;top:380px" width="4" height="5"><g transform="translate(0.50,0.00)"><path d="M0 0L2.4 2L0 4Z" fill="#c6c6c6"/></g></svg>
<svg class="b" style="left:37px;top:376px" width="30" height="10"><rect x="0.00" y="0.50" width="29.80" height="9.40" fill="#fff"/></svg>
<svg class="b" style="left:37px;top:385px" width="30" height="2"><rect x="0.00" y="0.70" width="29.80" height="1.10" fill="#217346"/></svg>
<div class="t " style="left:52px;top:382px;font-size:7.7px;color:#1f7a48;transform:translate(-50%,-50%);-webkit-text-stroke:.22px #1f7a48;letter-spacing:-.05px">Sheet1</div>
<svg class="b" style="left:80px;top:378px" width="10" height="10"><g transform="translate(0.20,0.00)"><circle cx="4.2" cy="4.2" r="3.85" fill="none" stroke="#777" stroke-width=".7"/><path d="M4.2 2V6.4M2 4.2H6.4" stroke="#777" stroke-width=".7"/></g></svg>
<svg class="b" style="left:405px;top:379px" width="2" height="2"><rect x="0.80" y="0.40" width="0.80" height="0.80" fill="#999"/></svg>
<svg class="b" style="left:405px;top:381px" width="2" height="2"><rect x="0.80" y="0.80" width="0.80" height="0.80" fill="#999"/></svg>
<svg class="b" style="left:405px;top:384px" width="2" height="1"><rect x="0.80" y="0.20" width="0.80" height="0.80" fill="#999"/></svg>
<svg class="b" style="left:413px;top:378px" width="8" height="9"><rect x="0.90" y="0.90" width="6.40" height="7.00" fill="#fff" stroke="#c6c6c6" stroke-width="0.6"/></svg>
<svg class="b" style="left:415px;top:380px" width="5" height="5"><g transform="translate(0.90,0.80)"><path d="M2.2 0L0 1.6L2.2 3.2Z" fill="#222"/></g></svg>
<svg class="b" style="left:421px;top:378px" width="241" height="9"><rect x="0.90" y="0.90" width="239.40" height="7.00" fill="#fff" stroke="#c6c6c6" stroke-width="0.6"/></svg>
<svg class="b" style="left:662px;top:378px" width="7" height="9"><rect x="0.30" y="0.90" width="6.40" height="7.00" fill="#fff" stroke="#c6c6c6" stroke-width="0.6"/></svg>
<svg class="b" style="left:664px;top:380px" width="4" height="5"><g transform="translate(0.60,0.80)"><path d="M0 0L2.2 1.6L0 3.2Z" fill="#222"/></g></svg>
<svg class="b" style="left:0px;top:388px" width="680" height="12"><rect x="0.00" y="0.00" width="680.00" height="12.00" fill="#f1f1f1"/></svg>
<div class="t " style="left:4.2px;top:394.2px;font-size:6px;color:#444;transform:translate(0,-50%);">就绪</div>
<svg class="b" style="left:27px;top:391px" width="8" height="7"><g transform="translate(0.50,0.00)"><rect x="0" y="0" width="6.5" height="1.8" fill="#555"/><rect x=".3" y="1.8" width="5.9" height="3.9" fill="#fff" stroke="#888" stroke-width=".5"/><path d="M2.2 1.8V5.7M4.3 1.8V5.7M.3 3.8H6.2" stroke="#999" stroke-width=".4"/></g></svg>
<svg class="b" style="left:44px;top:391px" width="8" height="8"><g transform="translate(0.80,0.00)"><circle cx="2.6" cy="1" r=".8" fill="#555"/><path d="M.4 2.6H4.8M2.6 2.6V4.4M2.6 4.4L1.2 6.2M2.6 4.4L3.6 5.4" stroke="#555" stroke-width=".6" fill="none"/><circle cx="4.6" cy="4.8" r="1.3" fill="none" stroke="#555" stroke-width=".5"/></g></svg>
<div class="t " style="left:52.3px;top:394.2px;font-size:6px;color:#444;transform:translate(0,-50%);word-spacing:2.6px;letter-spacing:.08px">辅助功能: 一切就绪</div>
<div class="t " style="left:410.7px;top:394.2px;font-size:6.25px;color:#444;transform:translate(0,-50%);">平均值: <span style='font-size:6.7px'>62.5</span></div>
<div class="t " style="left:453.7px;top:394.2px;font-size:6.25px;color:#444;transform:translate(0,-50%);">计数: <span style='font-size:6.7px'>8</span></div>
<div class="t " style="left:482.5px;top:394.2px;font-size:6.25px;color:#444;transform:translate(0,-50%);">求和: <span style='font-size:6.7px'>500</span></div>
<svg class="b" style="left:519px;top:390px" width="14" height="10"><rect x="0.30" y="0.20" width="13.10" height="9.80" fill="#c4c4c4"/></svg>
<svg class="b" style="left:522px;top:392px" width="9" height="7"><g transform="translate(0.60,0.00)"><path d="M0 0H6.6V6H0ZM0 2H6.6M0 4H6.6M2.2 0V6M4.4 0V6" fill="none" stroke="#6a6a6a" stroke-width=".6"/></g></svg>
<svg class="b" style="left:547px;top:391px" width="8" height="7"><g transform="translate(0.20,0.00)"><rect x=".3" y=".3" width="5.6" height="5.4" fill="none" stroke="#999" stroke-width=".5"/><rect x="1.5" y="1.5" width="3.2" height="3" fill="none" stroke="#aaa" stroke-width=".4"/></g></svg>
<svg class="b" style="left:568px;top:391px" width="8" height="7"><g transform="translate(0.40,0.00)"><rect x=".3" y=".3" width="5.6" height="5.4" fill="none" stroke="#999" stroke-width=".5"/><path d="M.3 3H5.9M3 3V5.7" stroke="#aaa" stroke-width=".4"/></g></svg>
<svg class="b" style="left:586px;top:393px" width="4" height="2"><rect x="0.60" y="0.90" width="2.60" height="0.60" fill="#777"/></svg>
<svg class="b" style="left:593px;top:394px" width="52" height="1"><rect x="0.00" y="0.00" width="52.00" height="0.60" fill="#9a9a9a"/></svg>
<svg class="b" style="left:617px;top:391px" width="4" height="7"><rect x="0.80" y="0.00" width="2.40" height="6.20" fill="#444"/></svg>
<svg class="b" style="left:648px;top:393px" width="4" height="2"><rect x="0.80" y="0.90" width="3.20" height="0.60" fill="#777"/></svg>
<svg class="b" style="left:650px;top:392px" width="1" height="4"><rect x="0.10" y="0.60" width="0.60" height="3.20" fill="#777"/></svg>
<div class="t " style="left:675.6px;top:394.2px;font-size:6.3px;color:#555;transform:translate(-100%,-50%);">100%</div>
<svg class="b" style="left:476px;top:343px" width="51" height="52"><g transform="translate(0.00,0.00)"><path d="M0 8L20.1 5V24.2H0Z" fill="#f2652a"/><path d="M22.7 4.7L49.9 .1V24.2H22.7Z" fill="#8cc40f"/><path d="M0 26.5H20.1V46.5L0 43.7Z" fill="#0ba5ef"/><path d="M22.7 26.5H49.9V50.2L22.7 46.5Z" fill="#fdbc0c"/></g></svg>
<div class="t " style="left:529.3px;top:360.6px;font-size:17.8px;color:#1a9fea;transform:translate(0,-50%);font-weight:700;-webkit-text-stroke:.45px #1a9fea;letter-spacing:.03px">电脑软硬件教程网</div>
<div class="t " style="left:538.9px;top:380.8px;font-size:12.9px;color:#f4642c;transform:translate(0,-50%);font-weight:bold;letter-spacing:-.42px;-webkit-text-stroke:.25px #f4642c">www.computer26.com</div>
<div class="b" style="left:674.7px;top:56px;width:3.5px;height:18px;background:#a8a8a8;border-radius:1.7px 1.7px 0 0"></div>
<div class="b" style="left:674.7px;top:72.3px;width:3.5px;height:15px;background:linear-gradient(180deg,#22d260,#3ddc78);border-radius:0 0 1.7px 1.7px"></div>
<svg class="b" style="left:668px;top:76px" width="8" height="6"><g transform="translate(0.20,0.70)"><path d="M0 3.4L3.3 .3L6.6 3.4" fill="none" stroke="#555" stroke-width=".9"/></g></svg>
<svg class="b" style="left:1px;top:16px" width="32" height="20"><rect x="1.20" y="1.80" width="29.50" height="16.40" fill="none" stroke="#e8262e" stroke-width="1.8"/></svg>
</div></body></html>
